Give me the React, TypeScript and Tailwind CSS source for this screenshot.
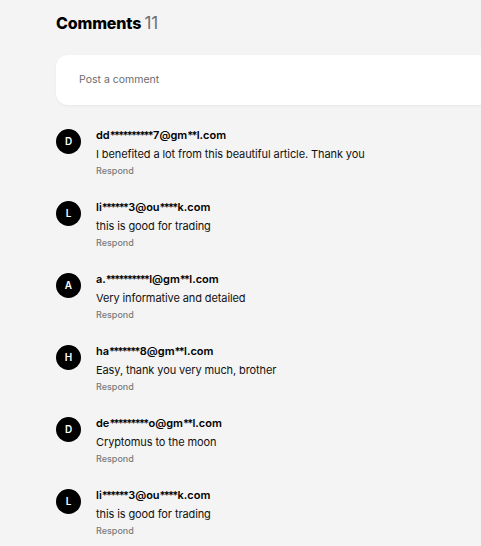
const comments = [
  { letter: "D", email: "dd**********7@gm**l.com", text: "I benefited a lot from this beautiful article. Thank you" },
  { letter: "L", email: "li******3@ou****k.com", text: "this is good for trading" },
  { letter: "A", email: "a.**********l@gm**l.com", text: "Very informative and detailed" },
  { letter: "H", email: "ha*******8@gm**l.com", text: "Easy, thank you very much, brother" },
  { letter: "D", email: "de*********o@gm**l.com", text: "Cryptomus to the moon" },
  { letter: "L", email: "li******3@ou****k.com", text: "this is good for trading" },
];

// masked emails: the asterisks sit tight together
function Email({ value }: { value: string }) {
  const parts = value.split(/(\*+)/);
  return (
    <span className="text-[11px] leading-[14px] font-semibold text-black">
      {parts.map((p, i) =>
        p.startsWith("*") ? (
          <span key={i} className="tracking-[-1.7px] mr-[1px]">{p}</span>
        ) : (
          <span key={i}>{p}</span>
        )
      )}
    </span>
  );
}

export default function App() {
  return (
    <div className="min-h-[546px] w-[481px] overflow-hidden bg-[#f4f4f4] font-['Inter',sans-serif]">
      <div className="pl-14 pt-[12px]">
        {/* Header */}
        <h2 className="text-[16px] leading-[22px] font-extrabold tracking-[-0.01em] text-black">
          Comments <span className="font-normal text-[17px] text-[#6e6e6e]">11</span>
        </h2>

        {/* Input */}
        <div className="mt-[21px] h-[50px] w-[520px] rounded-l-xl bg-white shadow-[0_1px_3px_rgba(0,0,0,0.05)] flex items-center pl-[23px]">
          <span className="text-[10.5px] text-[#6b6b6b]">Post a comment</span>
        </div>

        {/* List */}
        <div className="mt-[23px] flex flex-col gap-[23px]">
          {comments.map((c, i) => (
            <div key={i} className="flex items-start gap-[15px]">
              <div className="mt-[1px] w-[25px] h-[25px] rounded-full bg-black text-white text-[10px] font-semibold flex items-center justify-center shrink-0">
                {c.letter}
              </div>
              <div className="flex flex-col">
                <Email value={c.email} />
                <span className="mt-1 text-[11px] leading-[16px] tracking-[-0.1px] text-[#111]">{c.text}</span>
                <span className="mt-[3px] text-[9px] leading-[12px] font-medium text-[#7a7a7a]">Respond</span>
              </div>
            </div>
          ))}
        </div>
      </div>
    </div>
  );
}
